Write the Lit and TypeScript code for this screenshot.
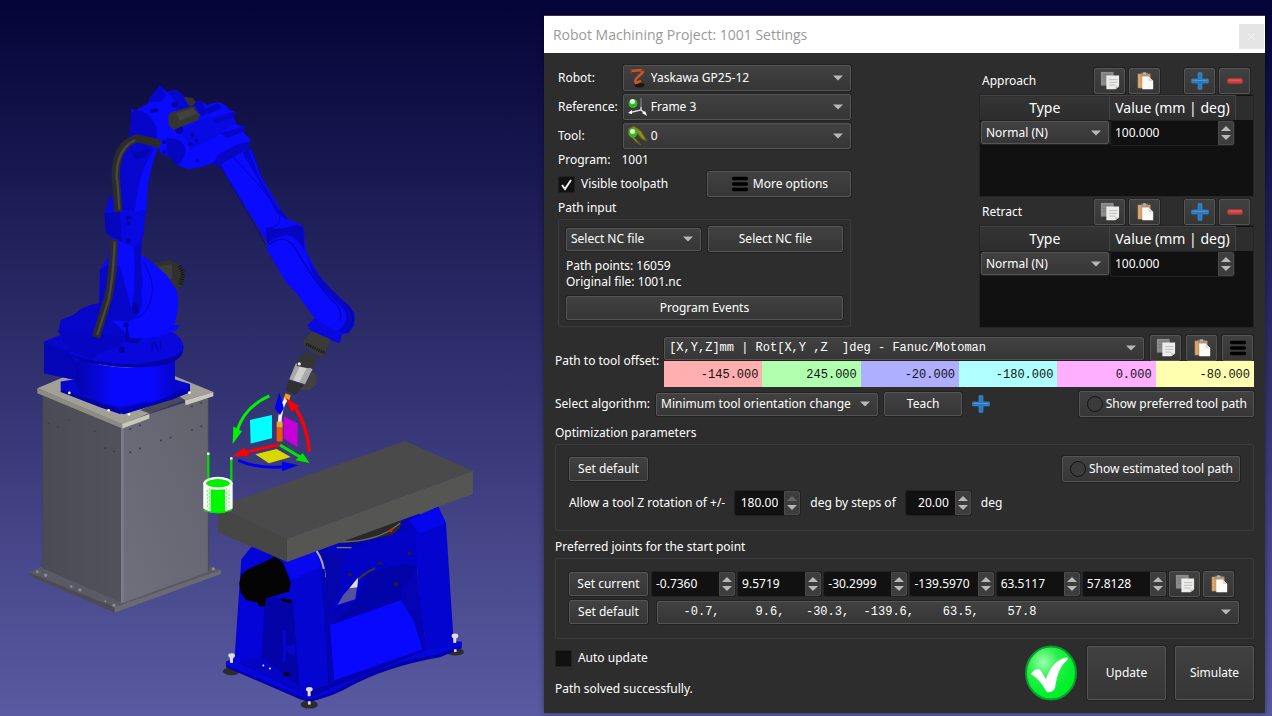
import { LitElement, html, svg, css } from "lit";
import { customElement, state } from "lit/decorators.js";

const arrow = html`<svg class="arrow" viewBox="0 0 11 6" aria-hidden="true"><path d="M0 .5H10L5 5.5Z" fill="#b8b8b8" /></svg>`;

const copyIcon = html`<svg class="icon" viewBox="0 0 22 22" aria-hidden="true">
  <path d="M1 1H15V16H1Z" fill="#8b8b8b" /><path d="M3 4H12M3 7H12M3 10H12" stroke="#777" />
  <path d="M7 5H21V17L17 20H7Z" fill="#ececea" /><path d="M21 17L17 20V17Z" fill="#bdbdbd" />
  <path d="M10 9.500H19M10 12.500H19M10 15.500H17" stroke="#bbb" />
</svg>`;

const pasteIcon = html`<svg class="icon" viewBox="0 0 22 22" aria-hidden="true">
  <path d="M3 3H17V19H3Z" fill="#cc9863" /><path d="M4 4H6V18H4Z" fill="#dba976" />
  <path d="M7 2H9V1H12V2H14V5H7Z" fill="#8c8c91" /><path d="M9 2H12V4H9Z" fill="#b5b5bb" />
  <path d="M8 6H15L20 11V20H8Z" fill="#fbfaf6" /><path d="M15 6V11H20Z" fill="#dad8d2" />
</svg>`;

const plusIcon = html`<svg class="icon" viewBox="0 0 22 22" aria-hidden="true">
  <path d="M9 2H13V9H20V13H13V20H9V13H2V9H9Z" fill="#2678c4" stroke="#3b8fd6" />
  <path d="M3 10.500H19" stroke="#4d9de0" />
</svg>`;

const minusIcon = html`<svg class="icon" viewBox="0 0 22 22" aria-hidden="true">
  <rect x="3" y="8.500" width="16" height="5" rx="1" fill="#cf4040" stroke="#b93636" /><path d="M4 10H18" stroke="#e57070" />
</svg>`;

const barsIcon = html`<svg class="icon" viewBox="0 0 22 22" aria-hidden="true">
  <path d="M4 5H18M4 11H18M4 17H18" stroke="#000" stroke-width="4" stroke-linecap="round" />
</svg>`;

const ringIcon = html`<svg class="ring" viewBox="0 0 18 18" aria-hidden="true">
  <circle cx="9" cy="9" r="7.500" fill="#3b3b3b" stroke="#151515" />
</svg>`;

const robotIcon = html`<svg class="lead" viewBox="0 0 20 20" aria-hidden="true">
  <ellipse cx="11.500" cy="17" rx="5" ry="2.500" fill="#181818" />
  <path d="M3 3L13 2L15 4L10 9M10 9Q6 12 8 15L13 13" fill="none" stroke="#c8562a" stroke-width="2.600" stroke-linejoin="round" />
  <path d="M3 1V6M13 2L17 3" stroke="#8c3a1d" stroke-width="1.500" />
</svg>`;

const frameIcon = html`<svg class="lead" viewBox="0 0 20 20" aria-hidden="true">
  <path d="M13 1V13L2 15.500M13 13L18 17" fill="none" stroke="#ddd" stroke-width="1.500" />
  <path d="M13 1V10" stroke="#666" stroke-width="2" /><path d="M0 16L4 13V17ZM19 19L14 16L17 14Z" fill="#fff" />
  <circle cx="5" cy="6.500" r="4.500" fill="#35b52c" /><circle cx="4.500" cy="4.500" r="2.500" fill="#d9fbd4" />
</svg>`;

const toolIcon = html`<svg class="lead" viewBox="0 0 20 20" aria-hidden="true">
  <path d="M0 3L6 0L13 5L19 15L14 13L9 7L4 9L13 19L8 16L1 9Z" fill="#8f8a1d" stroke="#5f5c13" />
  <circle cx="5" cy="7" r="4.500" fill="#35b52c" /><circle cx="4.500" cy="5.500" r="2.500" fill="#d9fbd4" />
</svg>`;

const okIcon = html`<svg class="ok" viewBox="0 0 54 56" role="img" aria-label="Path is valid">
  <defs><radialGradient id="okg" cx=".35" cy=".3" r=".6"><stop offset="0" stop-color="#9dffb0" /><stop offset=".5" stop-color="#2bf04c" /><stop offset="1" stop-color="#00f02c" /></radialGradient></defs>
  <ellipse cx="27" cy="28" rx="25" ry="26.500" fill="url(#okg)" stroke="#0a9e28" stroke-width="2" />
  <path d="M7 29C10 24 15 23 17 26L22 34C26 22 34 13 43 12.500C44 13 44 14 43 15.500C35 22 33 31 31 43C29 48 23 48 22 46C18 38 13 33 7 29Z" fill="#fff" />
</svg>`;

@customElement("robot-scene")
export class RobotScene extends LitElement {
  static styles = css`
    :host { display: block; min-width: 0; }
    .view { display: block; width: 100%; height: auto; overflow: visible; }
  `;

  private pedestal = svg`
    <path d="M28 1508L65 1490L303 1590L565 1488L603 1500V1512L285 1628L28 1518Z" fill="#5a5a64" />
    <path d="M28 1508L283 1612V1628L28 1518Z" fill="#4b4b56" />
    <path d="M283 1612L603 1500V1512L285 1628Z" fill="#6a6a77" />
    <path d="M68 960L303 1060V1598L68 1495Z" fill="url(#pedL)" />
    <path d="M303 1060L565 975V1505L312 1598H303Z" fill="url(#pedR)" />
    <path d="M307 1070V1598" stroke="#7b7b8d" stroke-width="8" />
    <path d="M565 980V1505M68 975V1495" stroke="#42424d" stroke-width="2" />
    <path d="M52 955L300 850L580 966L495 992L485 985L388 1030L307 1064Z" fill="#a19f96" />
    <path d="M52 955L307 1062V1076L52 970Z" fill="#8d8c83" />
    <path d="M307 1062L388 1032V1046L307 1076ZM495 992L580 966V979L497 1006Z" fill="#cac8bd" />
    <path d="M360 1020L470 975L495 990L388 1030Z" fill="#4a4a52" />
    <g fill="#3c3c47"><circle cx="86" cy="1060" r="3" /><circle cx="113" cy="1071" r="3" /><circle cx="146" cy="1051" r="2" /><circle cx="224" cy="1084" r="3" /><circle cx="256" cy="1135" r="3" /><circle cx="282" cy="1145" r="3" /><circle cx="331" cy="1077" r="3" /><circle cx="360" cy="1066" r="3" /><circle cx="331" cy="1147" r="3" /><circle cx="360" cy="1136" r="3" /><circle cx="423" cy="1112" r="3" /><circle cx="452" cy="1103" r="3" /><circle cx="516" cy="1080" r="3" /><circle cx="544" cy="1069" r="3" /><circle cx="516" cy="1009" r="3" /><circle cx="544" cy="999" r="3" /></g>
    <g fill="#8a8a98"><circle cx="52" cy="1506" r="4" /><circle cx="77" cy="1516" r="5" /><circle cx="154" cy="1550" r="4" /><circle cx="180" cy="1560" r="5" /><circle cx="256" cy="1594" r="3" /><circle cx="282" cy="1606" r="5" /><circle cx="580" cy="1497" r="5" /></g>`;

  private robot = svg`
    <path d="M380 582L450 570L480 585L495 610L488 645L468 664L420 625Z" fill="#30302f" />
    <path d="M415 590L455 582L458 625L435 632Z" fill="#3c3c3a" />
    <path d="M478 588L490 610L482 645" fill="none" stroke="#141414" stroke-width="12" stroke-dasharray="3 4" />
    <path d="M122 935L165 928H462L510 942V967L455 990L430 996L310 1033L240 1010L175 985L122 958Z" fill="#0606d0" />
    <path d="M122 958L302 1018V1033L240 1012L122 966Z" fill="#0404a0" />
    <path d="M302 1018L372 1000L510 950V967L430 996L310 1033Z" fill="#0202b0" />
    <path d="M165 860Q300 920 465 870V968Q420 1000 370 995Q300 1020 240 995L180 972L165 930Z" fill="url(#barrel)" />
    <path d="M72 815L122 795L115 785L122 750L160 735Q190 705 240 700L300 760L330 810L300 850L165 880V930L72 910Z" fill="#0707cc" />
    <path d="M72 818L150 845L168 880V930L72 910Z" fill="#0606b8" />
    <path d="M145 850L240 810L455 785Q486 800 491 832Q486 868 440 882Q340 900 230 880Q170 870 145 850Z" fill="#0808dc" />
    <path d="M145 850Q240 885 340 882Q450 876 489 842Q487 868 440 884Q340 902 230 882Q170 872 145 850Z" fill="#0505a4" />
    <path d="M115 785L205 790L315 800L300 830L245 845L220 868L150 845Z" fill="#0606c2" />
    <path d="M240 600L262 565L300 575L370 558L400 580L440 615L470 660Q482 710 462 765H480L470 780L415 800L340 810L280 755L238 700Z" fill="#0a0aff" />
    <path d="M240 600L270 580Q350 590 365 680Q370 740 325 755L275 750L238 700Z" fill="#0707c8" />
    <path d="M370 575Q405 630 395 680Q385 730 350 745" fill="none" stroke="#0505a8" stroke-width="3" />
    <path d="M320 760L330 805L370 805L350 820L315 815Z" fill="#0404a4" />
    <path d="M397 818V842M402 815L416 845M422 812V842" stroke="#0404b0" stroke-width="4" />
    <path d="M330 190L415 230Q388 300 382 370L378 430L366 500L362 570L368 640L352 735L335 720L300 590L262 575L268 515L300 420V300Z" fill="#0a0aff" />
    <path d="M330 190L372 200L402 240Q355 300 345 425L300 420V300L312 240Z" fill="#0707cf" />
    <path d="M340 530L366 500L362 570L368 640L352 735L335 720Q350 620 340 530Z" fill="#0707c8" />
    <path d="M335 128L332 115L345 122L385 100L392 80L420 45L440 65L470 60L492 78L515 115L540 90L560 105L595 95L616 106L630 120L648 127L640 145L652 165L675 170L672 190L692 208L688 224L640 260L575 280L550 290L505 298L470 285L455 262L425 252L415 235L385 205L330 195Z" fill="#0a0aff" />
    <path d="M335 128L350 120Q400 130 410 180V206L330 196Z" fill="#0606c8" />
    <path d="M392 80L420 45L440 75L425 95H390Z" fill="#0707cc" />
    <path d="M440 65L470 60L492 78L508 118L470 125Q470 90 440 65Z" fill="#0707cd" />
    <path d="M440 205Q490 200 497 240Q490 280 470 285L440 250Z" fill="#0505c2" />
    <path d="M485 182L540 150L640 125L645 160L590 200L510 240Z" fill="#0909e4" />
    <path d="M578 150L648 124L642 140L590 160ZM603 190L675 168L672 184L620 205ZM600 250L655 222L690 215L686 232L605 290L575 282Z" fill="#0707c4" />
    <path d="M520 95L545 90L560 130L545 140ZM555 118L595 100L605 115L565 132Z" fill="#0606be" />
    <g fill="#0505a0"><circle cx="397" cy="123" r="7" /><circle cx="408" cy="120" r="7" /><circle cx="463" cy="104" r="9" /><circle cx="478" cy="180" r="12" /><circle cx="517" cy="194" r="6" /><circle cx="529" cy="212" r="6" /><circle cx="512" cy="223" r="6" /><circle cx="532" cy="272" r="5" /><circle cx="433" cy="216" r="6" /><circle cx="433" cy="246" r="6" /></g>
    <path d="M490 80L520 84L528 98L512 112Z" fill="#32322f" />
    <path d="M445 135L455 126L520 108L540 135L535 150L460 180L446 165Z" fill="#343432" />
    <path d="M470 130L518 115L532 130L480 152Z" fill="#41413f" />
    <path d="M600 285L690 232L705 265L725 320L760 390L800 445L845 465L853 490L858 545L900 620L960 690L985 705L1003 730V765L985 790L935 800L895 760L830 670L800 640L738 535L745 520Z" fill="#0a0aff" />
    <path d="M668 248L690 232L706 265L725 320L760 390L806 450Q770 440 752 395Z" fill="#0606c9" />
    <path d="M690 240L720 320L780 420" fill="none" stroke="#0a0afa" stroke-width="6" />
    <path d="M738 475Q790 480 830 464L850 472L853 545Q835 500 800 495Q760 500 742 520Z" fill="#0606c0" />
    <path d="M600 285L738 525M640 262Q770 400 780 435Q785 475 740 475" fill="none" stroke="#0606b8" stroke-width="3" />
    <path d="M745 525Q800 480 835 550Q880 630 935 690Q970 715 960 750" fill="none" stroke="#0404b0" stroke-width="4" />
    <path d="M853 545Q885 620 985 705L1003 730V765L985 790L950 785Q990 760 975 720L890 640Z" fill="#0707c6" />
    <path d="M970 710Q1000 745 965 785M985 710Q1015 750 980 785" fill="none" stroke="#0404a8" stroke-width="3" />
    <path d="M862 765L885 745L920 768L966 790L960 820L935 812L870 780Z" fill="#0808df" />
    <path d="M268 380L280 378L285 425H345L380 418L376 432L370 500L345 530L320 525L258 490L254 430Z" fill="#0808e0" />
    <path d="M254 430L300 425L305 515L258 490Z" fill="#0606bc" />
    <g fill="#0404a0"><rect x="318" y="438" width="16" height="10" /><circle cx="325" cy="460" r="6" /><circle cx="325" cy="512" r="7" /><ellipse cx="346" cy="715" rx="9" ry="17" /><circle cx="318" cy="765" r="8" /><circle cx="305" cy="840" r="10" /></g>
    <path d="M422 222L352 205Q282 225 288 330L295 425M281 508Q280 620 264 685L228 802" fill="none" stroke="#2b2b2a" stroke-width="25" stroke-linejoin="round" />
    <path d="M290 330Q286 240 345 210M292 330L298 418M284 515Q280 620 266 688L232 795" fill="none" stroke="#474745" stroke-width="7" />
    <path d="M345 265Q380 270 390 240L378 235Q360 255 330 240Z" fill="#0505b0" />
    <g fill="#fff"><circle cx="148" cy="969" r="4" /><circle cx="266" cy="1021" r="4" /><circle cx="327" cy="1033" r="4" /><circle cx="508" cy="968" r="4" /></g>`;

  private torch = svg`
    <path d="M395 5L452 28L440 60L433 82L415 78L370 48L372 30Z" fill="#3a3a38" />
    <path d="M378 42L436 70" stroke="#1b1b1b" stroke-width="9" stroke-dasharray="4 3" />
    <path d="M372 65L412 80L400 115L355 100Z" fill="#353533" />
    <path d="M385 150L397 122L411 142L408 165L390 180H365L358 170Z" fill="#42423f" />
    <path d="M348 100L398 117L375 163L328 148Z" fill="#a9aaa6" /><path d="M360 108L380 115L358 157L340 151Z" fill="#cfd0cc" />
    <path d="M355 78L395 100L385 115L350 108Z" fill="#353533" />
    <path d="M325 150L372 165L345 195L318 180Z" fill="#30302f" />
    <circle cx="358" cy="102" r="5" fill="#e8e8e8" />
    <path d="M317 190L332 196L328 212L310 208Z" fill="#f09a20" />
    <path d="M318 208Q300 235 299 282" fill="none" stroke="#f4f4f4" stroke-width="11" />
    <rect x="290" y="275" width="18" height="18" fill="#f0a32c" /><rect x="290" y="293" width="18" height="42" rx="3" fill="#f05800" />
    <path d="M298 188L312 235L300 255L284 235Z" fill="#0000f0" />`;

  private gizmo = svg`
    <path d="M210 270L276 255V325L212 341Z" fill="#00ffff" /><path d="M311 259L353 280V353L311 325Z" fill="#c800d8" />
    <path d="M226 373L290 357L332 381L267 400Z" fill="#d8d800" />
    <path d="M268 198Q195 230 172 300" fill="none" stroke="#00f400" stroke-width="9" /><path d="M158 342L160 290L186 304Z" fill="#00f400" />
    <path d="M388 365Q380 280 342 228" fill="none" stroke="#f00" stroke-width="10" /><path d="M318 205L357 228L334 246Z" fill="#f00" />
    <path d="M175 391Q235 418 320 410" fill="none" stroke="#0000f0" stroke-width="9" /><path d="M355 406L306 395V424Z" fill="#0000f0" />
    <path d="M298 344L200 366" stroke="#f00" stroke-width="9" /><path d="M157 380L193 353L207 378Z" fill="#f00" />
    <path d="M300 345L362 382" stroke="#00e400" stroke-width="9" /><path d="M389 399L347 391L368 369Z" fill="#00e400" />
    <path d="M85 372V450M154 386V460" stroke="#00d800" stroke-width="7" /><path d="M85 368V375M154 382V389" stroke="#fff" stroke-width="7" />
    <path d="M70 458Q113 430 158 458V536Q113 562 70 536Z" fill="#fff" />
    <path d="M92 478H135V548Q113 552 92 547Z" fill="#00f800" />
    <ellipse cx="114" cy="461" rx="36" ry="14" fill="#00f000" /><ellipse cx="114" cy="460" rx="40" ry="16" fill="none" stroke="#fff" stroke-width="7" />
    <path d="M82 480V535M88 475V540M139 475V540M147 480V530" stroke="#00f000" stroke-width="2" stroke-dasharray="7 4" />
    <path d="M72 541Q113 556 156 540" fill="none" stroke="#00e800" stroke-width="4" />`;

  private positioner = svg`
    <g fill="#2b2b2b"><ellipse cx="94" cy="514" rx="25" ry="12" /><ellipse cx="328" cy="614" rx="26" ry="12" /><ellipse cx="766" cy="456" rx="26" ry="11" /></g>
    <path d="M78 485L105 475L300 420L740 415L785 428V445L720 472Q560 500 450 560Q400 590 328 606L300 598L78 502Z" fill="#0303a8" />
    <path d="M78 485L110 478L300 580L330 592L400 562L690 446L785 424V438L715 462Q560 490 450 548Q390 585 326 598L78 496Z" fill="#0505dd" />
    <path d="M124 178L155 140L270 150L300 580L180 480L103 486Z" fill="#0404d8" />
    <path d="M195 290L280 300L298 560L185 470Z" fill="#0303a8" /><path d="M110 486L185 470L298 560V578L285 572Z" fill="#0404c4" /><path d="M248 395L258 392V480L248 486ZM260 440L285 432V470L260 455Z" fill="#0606d0" />
    <path d="M350 150L660 40L650 200L680 450L400 548Z" fill="#0404b4" />
    <path d="M390 375L602 300L640 360L668 448L402 542Z" fill="#0808ff" />
    <path d="M355 155L410 130L425 160L655 75L652 200Q635 250 605 258L470 300L385 335Z" fill="#0303c6" />
    <path d="M470 300L500 225Q620 180 650 200Q640 245 605 258L602 300L400 372Z" fill="#0303aa" />
    <path d="M430 157L420 280L385 335L370 190L355 155Z" fill="#0505ac" />
    <path d="M645 60L715 20L738 70L762 440L680 450L660 300L650 190Z" fill="#0404d0" />
    <path d="M625 60L715 20L738 70L660 100Z" fill="#0606ec" />
    <path d="M400 130L605 60L600 85L575 105L460 128Z" fill="#292a28" /><path d="M410 125Q530 130 600 70" fill="none" stroke="#686a66" stroke-width="4" /><path d="M560 95L580 84L576 97Z" fill="#d02010" />
    <path d="M410 143H455" stroke="#777" stroke-width="4" />
    <path d="M448 265L475 235L466 298L412 315L430 285Z" fill="#5252a0" /><path d="M448 265L475 232L472 262Z" fill="#ddd" /><path d="M475 238Q495 218 526 205" fill="none" stroke="#35353a" stroke-width="7" />
    <path d="M245 185L275 245L300 580L385 555L373 200L345 150Z" fill="#0505d2" />
    <path d="M245 185L345 150L365 200L275 240Z" fill="#0707f0" />
    <path d="M350 153Q372 185 375 232" fill="none" stroke="#aaa" stroke-width="6" />
    <path d="M363 210L374 206L402 545L388 560Z" fill="#0404b0" />
    <path d="M118 250L125 222L150 205L190 188L225 170L250 190L272 248L268 275L198 295L195 318L178 320L172 308L138 300L122 278Z" fill="#040404" />
    <path d="M245 298L275 306M250 522L270 524" stroke="#050505" stroke-width="9" />
    <g fill="#202033"><circle cx="450" cy="224" r="6" /><circle cx="540" cy="191" r="6" /><circle cx="629" cy="160" r="6" /><circle cx="588" cy="253" r="7" /></g>
    <g fill="#ddd"><ellipse cx="95" cy="467" rx="10" ry="7" /><rect x="90" y="468" width="9" height="21" /><ellipse cx="328" cy="568" rx="10" ry="7" /><rect x="323" y="568" width="9" height="21" /><ellipse cx="765" cy="408" rx="10" ry="7" /><rect x="760" y="408" width="9" height="21" /><circle cx="190" cy="497" r="3" /><circle cx="210" cy="506" r="3" /><rect x="324" y="604" width="8" height="10" /><rect x="762" y="448" width="8" height="8" /></g>`;

  render() {
    return html`<svg class="view" viewBox="0 0 544 716" role="img" aria-label="Robot cell with positioner table">
      <defs>
        <linearGradient id="pedL"><stop offset="0" stop-color="#4b4b55" /><stop offset="1" stop-color="#52525d" /></linearGradient>
        <linearGradient id="pedR" x1="0" y1="1" x2="1" y2="0"><stop offset="0" stop-color="#70707d" /><stop offset="1" stop-color="#62626d" /></linearGradient>
        <linearGradient id="barrel"><stop offset="0" stop-color="#0505a8" /><stop offset=".4" stop-color="#0808ff" /><stop offset=".75" stop-color="#0808ff" /><stop offset="1" stop-color="#0505c8" /></linearGradient>
      </defs>
      <g transform="translate(20 70) scale(.33333)">${this.pedestal}${this.robot}</g>
      <g transform="translate(200 500) scale(.33333)">${this.positioner}</g>
      <path d="M218 507L405 441L473 471L287 539Z" fill="#4a4a4a" />
      <path d="M287 539L473 471V494L287 562Z" fill="#555553" />
      <path d="M218 507L287 539V562L218 532Z" fill="#464644" />
      <g transform="translate(180 330) scale(.33333)">${this.torch}${this.gizmo}</g>
    </svg>`;
  }
}

interface Spin { id: string; label: string; value: string; kind: string; atMax?: boolean }

@customElement("settings-dialog")
export class SettingsDialog extends LitElement {
  static styles = css`
    :host { display: flex; flex-direction: column; min-width: 0; background: #2d2d2d; color: #fff; border-top: 1px solid #3a2e5c; box-shadow: 0 0 6px #0006; font: 12px/16px "Noto Sans", "Open Sans", sans-serif; }
    * { box-sizing: border-box; }
    button, input, select { font: inherit; color: inherit; margin: 0; min-width: 0; }
    .title { display: flex; align-items: center; justify-content: space-between; height: 37px; padding: 4px 1px 0 9px; background: #fff; color: #999; }
    .title h1 { margin: 0 0 4px; font: 14px/20px "Open Sans", "Noto Sans", sans-serif; }
    .close { width: 25px; height: 25px; padding: 0; border: 0; background: #e5e5e5; color: #fff; }
    .close svg { display: block; width: 7px; margin: auto; }
    .body { display: flex; flex-direction: column; padding: 12px 11px 12px; flex: 1; }
    .top { display: grid; grid-template-columns: 293fr 275fr; column-gap: 128px; padding-left: 3px; }
    .left { display: flex; flex-direction: column; }
    .left .caption { margin-top: 3px; }
    .fields { display: grid; grid-template-columns: auto 1fr; gap: 3px 5px; align-items: center; }
    .program { display: flex; gap: 11px; margin: 3px 0; }
    .split { display: flex; align-items: center; justify-content: space-between; }
    .btn { display: inline-flex; align-items: center; justify-content: center; gap: 2px; padding: 0 6px; height: 24px; border: 1px solid #555; border-radius: 2px; background: linear-gradient(#414141, #363636); box-shadow: 0 0 0 1px #222; white-space: nowrap; }
    .btn.tall { height: 26px; }
    .btn.more { width: 144px; gap: 3px; }
    .btn.square { width: 31px; height: 26px; padding: 0; flex: none; }
    .btn.big { width: 79px; height: 54px; }
    .btn.set { width: 79px; }
    .btn.teach { width: 78px; }
    .icon { display: block; width: 20px; height: 20px; }
    .ring { width: 18px; height: 18px; }
    .plain { padding: 0; border: 0; background: none; }
    .drop { display: grid; grid-template-columns: auto 1fr auto; align-items: center; min-width: 0; }
    .drop select { grid-area: 1 / 1 / 2 / 4; width: 100%; height: 23px; padding: 0 24px 0 4px; appearance: none; border: 1px solid #555; border-radius: 2px; background: linear-gradient(#414141, #363636); box-shadow: 0 0 0 1px #222; white-space: pre; }
    .drop .lead { grid-area: 1 / 1; width: 20px; height: 20px; margin-left: 5px; pointer-events: none; }
    .drop .arrow { grid-area: 1 / 3; width: 11px; height: 6px; margin-right: 7px; pointer-events: none; }
    .drop.lg select { height: 26px; padding-left: 27px; }
    .drop.mono select { font: 12px/16px "Liberation Mono", monospace; }
    .check { display: flex; align-items: center; gap: 6px; }
    .check input { appearance: none; width: 17px; height: 17px; border: 1px solid #222; background: #111 center / 13px no-repeat; }
    .check input:checked { background-image: url("data:image/svg+xml,%3Csvg xmlns='http://www.w3.org/2000/svg' viewBox='0 0 13 13'%3E%3Cpath d='M2 7l3 4L11 2' fill='none' stroke='%23eee' stroke-width='2'/%3E%3C/svg%3E"); }
    .caption { margin: 0; font: inherit; }
    .group { margin: 3px 0 0; border: 1px solid #3c3c3c; border-radius: 2px; }
    .path { display: grid; grid-template-columns: 1fr 1fr; gap: 6px 7px; padding: 6px 7px; }
    .path .note, .path .events { grid-column: 1 / 3; }
    .path .note { margin: 0; }
    .right { display: flex; flex-direction: column; gap: 2px; padding-top: 3px; }
    .bar { display: flex; align-items: center; gap: 4px; height: 26px; padding: 0 4px 0 3px; }
    .bar h2 { flex: 1; margin: 0; font: inherit; }
    .bar .gap { width: 16px; }
    .list { height: 103px; border: 1px solid #252525; background: #111; }
    table { width: 100%; border-collapse: collapse; table-layout: fixed; }
    th { height: 24px; padding: 0; border-right: 1px solid #444; border-top: 1px solid #444; background: linear-gradient(#343434, #2d2d2d); font: 14px/22px "Noto Sans", "Open Sans", sans-serif; white-space: nowrap; }
    th:last-child { border: 0; width: 18px; background: #2d2d2d; }
    th:first-child { width: 130px; }
    td { padding: 1px; }
    .spin { display: grid; grid-template-columns: 1fr 16px; height: 24px; border-radius: 2px; background: #111; box-shadow: 0 0 0 1px #222; min-width: 0; }
    .spin input { width: 100%; padding: 0 0 0 4px; border: 0; background: none; outline: none; }
    .spin.end input { text-align: right; padding: 0 6px 0 0; }
    .steps { display: grid; grid-template-rows: 1fr 1fr; padding: 2px 0; border: 1px solid #4a4a4a; border-radius: 0 2px 2px 0; background: #3d3d3d; }
    .steps button { display: grid; place-items: center; padding: 0; border: 0; background: none; min-height: 0; }
    .steps svg { width: 10px; height: 5px; fill: #b8b8b8; }
    .steps button:disabled svg { fill: #666; }
    .offset { display: grid; grid-template-columns: auto 1fr; align-items: center; column-gap: 5px; margin-top: 7px; }
    .pick { display: flex; align-items: center; gap: 5px; height: 26px; padding-right: 1px; }
    .pick .drop { flex: 1; margin: 0 1px 0 0; }
    .pose { display: grid; grid-template-columns: repeat(6, 1fr); }
    .pose input { width: 100%; height: 26px; padding: 2px 4px 0; border: 0; border-radius: 0; color: #111; text-align: right; font: 12px/16px "Liberation Mono", monospace; }
    .x { background: #ffafaf; } .y { background: #afffaf; } .z { background: #afafff; }
    .rx { background: #afffff; } .ry { background: #ffafff; } .rz { background: #ffffaf; }
    .algo { display: flex; align-items: center; gap: 6px; margin: 4px 0 8px; }
    .algo .drop { width: 222px; }
    .algo .plain { margin-left: 3px; }
    .algo .last { margin-left: auto; }
    .opt { padding: 11px 13px 15px; }
    .limits { display: flex; align-items: center; gap: 10px; margin-top: 9px; }
    .limits .spin { width: 65px; }
    .sp { margin-top: 8px; }
    .joints { display: grid; gap: 3px; padding: 12px 14px 14px 13px; }
    .jrow { display: flex; align-items: center; gap: 3px; }
    .jrow .spins { flex: 1; display: grid; grid-template-columns: repeat(6, 1fr); gap: 3px; }
    .jrow .btn.set { margin-right: 1px; }
    .jrow .drop { flex: 1; margin-left: 5px; }
    .jrow .square:last-child { margin-right: 5px; }
    .foot { display: flex; align-items: center; gap: 9px; margin-top: 6px; }
    .status { flex: 1; display: flex; flex-direction: column; gap: 14px; }
    .status p { margin: 0; }
    .ok { width: 54px; height: 56px; }
  `;

  @state() private joints = ["-0.7360", "9.5719", "-30.2999", "-139.5970", "63.5117", "57.8128"];

  private drop(id: string, text: string, opts: { cls?: string; icon?: unknown; label?: string } = {}) {
    return html`<div class="drop ${opts.cls ?? ""}">
      <select id=${id} aria-label=${opts.label ?? id}><option>${text}</option></select>${opts.icon ?? ""}${arrow}
    </div>`;
  }

  private nudge(e: Event, dir: number) {
    const input = (e.currentTarget as HTMLElement).closest(".spin")!.querySelector("input")!;
    const digits = (input.value.split(".")[1] ?? "").length;
    input.value = (parseFloat(input.value) + dir).toFixed(digits);
  }

  private spin(s: Spin) {
    return html`<div class="spin ${s.kind}">
      <input id=${s.id} inputmode="decimal" aria-label=${s.label} .value=${s.value} />
      <div class="steps">
        <button aria-label="Increase" ?disabled=${s.atMax} @click=${(e: Event) => this.nudge(e, 1)}><svg viewBox="0 0 10 5"><path d="M0 5L5 0L10 5Z" /></svg></button>
        <button aria-label="Decrease" @click=${(e: Event) => this.nudge(e, -1)}><svg viewBox="0 0 10 5"><path d="M0 0H10L5 5Z" /></svg></button>
      </div>
    </div>`;
  }

  private square(label: string, icon: unknown) {
    return html`<button class="btn square" aria-label=${label}>${icon}</button>`;
  }

  private moves(name: string) {
    return html`<section>
      <div class="bar"><h2>${name}</h2>${this.square("Copy", copyIcon)}${this.square("Paste", pasteIcon)}<span class="gap"></span>${this.square("Add", plusIcon)}${this.square("Remove", minusIcon)}</div>
      <div class="list"><table>
        <thead><tr><th>Type</th><th>Value (mm | deg)</th><th></th></tr></thead>
        <tbody><tr>
          <td>${this.drop(`${name}-type`, "Normal (N)")}</td>
          <td>${this.spin({ id: `${name}-value`, label: `${name} value`, value: "100.000", kind: "" })}</td><td></td>
        </tr></tbody>
      </table></div>
    </section>`;
  }

  render() {
    const nb = (s: string) => s.replace(/ /g, "\u00a0");
    const pose = [["x", "-145.000"], ["y", "245.000"], ["z", "-20.000"], ["rx", "-180.000"], ["ry", "0.000"], ["rz", "-80.000"]];
    return html`
      <header class="title"><h1>Robot Machining Project: 1001 Settings</h1>
        <button class="close" aria-label="Close"><svg viewBox="0 0 7 7"><path d="M.5 .5L6.500 6.500M6.500 .5L.5 6.500" stroke="#f6f6f6" /></svg></button></header>
      <div class="body">
        <div class="top">
          <div class="left">
            <div class="fields">
              <label for="robot">Robot:</label>${this.drop("robot", "Yaskawa GP25-12", { cls: "lg", icon: robotIcon, label: "Robot" })}
              <label for="ref">Reference:</label>${this.drop("ref", "Frame 3", { cls: "lg", icon: frameIcon, label: "Reference" })}
              <label for="tool">Tool:</label>${this.drop("tool", "0", { cls: "lg", icon: toolIcon, label: "Tool" })}
            </div>
            <div class="program"><span>Program:</span><span>1001</span></div>
            <div class="split"><label class="check"><input type="checkbox" checked />Visible toolpath</label>
              <button class="btn tall more">${barsIcon}More options</button></div>
            <h2 class="caption">Path input</h2>
            <div class="group path">
              ${this.drop("source", "Select NC file", { label: "Path source" })}
              <button class="btn tall">Select NC file</button>
              <p class="note">Path points: 16059<br />Original file: 1001.nc</p>
              <button class="btn events">Program Events</button>
            </div>
          </div>
          <div class="right">${this.moves("Approach")}${this.moves("Retract")}</div>
        </div>
        <div class="offset">
          <label for="format">Path to tool offset:</label>
          <div>
            <div class="pick">${this.drop("format", nb("[X,Y,Z]mm | Rot[X,Y ,Z  ]deg - Fanuc/Motoman"), { cls: "mono", label: "Pose format" })}
              ${this.square("Copy", copyIcon)}${this.square("Paste", pasteIcon)}${this.square("Menu", barsIcon)}</div>
            <div class="pose">${pose.map(([k, v]) => html`<input class=${k} aria-label=${k} .value=${v} />`)}</div>
          </div>
        </div>
        <div class="algo">
          <label for="algo">Select algorithm:</label>${this.drop("algo", "Minimum tool orientation change", { label: "Algorithm" })}
          <button class="btn teach">Teach</button><button class="plain" aria-label="Add">${plusIcon}</button>
          <button class="btn tall last">${ringIcon}Show preferred tool path</button>
        </div>
        <h2 class="caption">Optimization parameters</h2>
        <div class="group opt">
          <div class="split"><button class="btn set">Set default</button><button class="btn tall">${ringIcon}Show estimated tool path</button></div>
          <div class="limits"><label for="rot">Allow a tool Z rotation of +/-</label>${this.spin({ id: "rot", label: "Z rotation", value: "180.00", kind: "end", atMax: true })}
            <label for="step">deg by steps of</label>${this.spin({ id: "step", label: "Step", value: "20.00", kind: "end" })}<span>deg</span></div>
        </div>
        <h2 class="caption sp">Preferred joints for the start point</h2>
        <div class="group joints">
          <div class="jrow"><button class="btn set">Set current</button>
            <div class="spins">${this.joints.map((v, i) => this.spin({ id: `j${i}`, label: `Joint ${i + 1}`, value: v, kind: "" }))}</div>
            ${this.square("Copy", copyIcon)}${this.square("Paste", pasteIcon)}</div>
          <div class="jrow"><button class="btn set">Set default</button>${this.drop("preset", nb("   -0.7,     9.6,   -30.3,  -139.6,    63.5,    57.8"), { cls: "mono", label: "Joint preset" })}</div>
        </div>
        <div class="foot">
          <div class="status"><label class="check"><input type="checkbox" />Auto update</label><p>Path solved successfully.</p></div>
          ${okIcon}<button class="btn big">Update</button><button class="btn big">Simulate</button>
        </div>
      </div>`;
  }
}

@customElement("app-root")
export class AppRoot extends LitElement {
  static styles = css`
    :host { display: grid; grid-template-columns: minmax(0, 43fr) minmax(0, 57fr); align-items: start; box-sizing: border-box; min-height: 100vh; padding-right: 7px; overflow: hidden; background: linear-gradient(#040438, #5a5aa2); }
    .dialog { margin: 15px 0 3px; }
  `;
  render() {
    return html`<robot-scene></robot-scene><settings-dialog class="dialog"></settings-dialog>`;
  }
}
